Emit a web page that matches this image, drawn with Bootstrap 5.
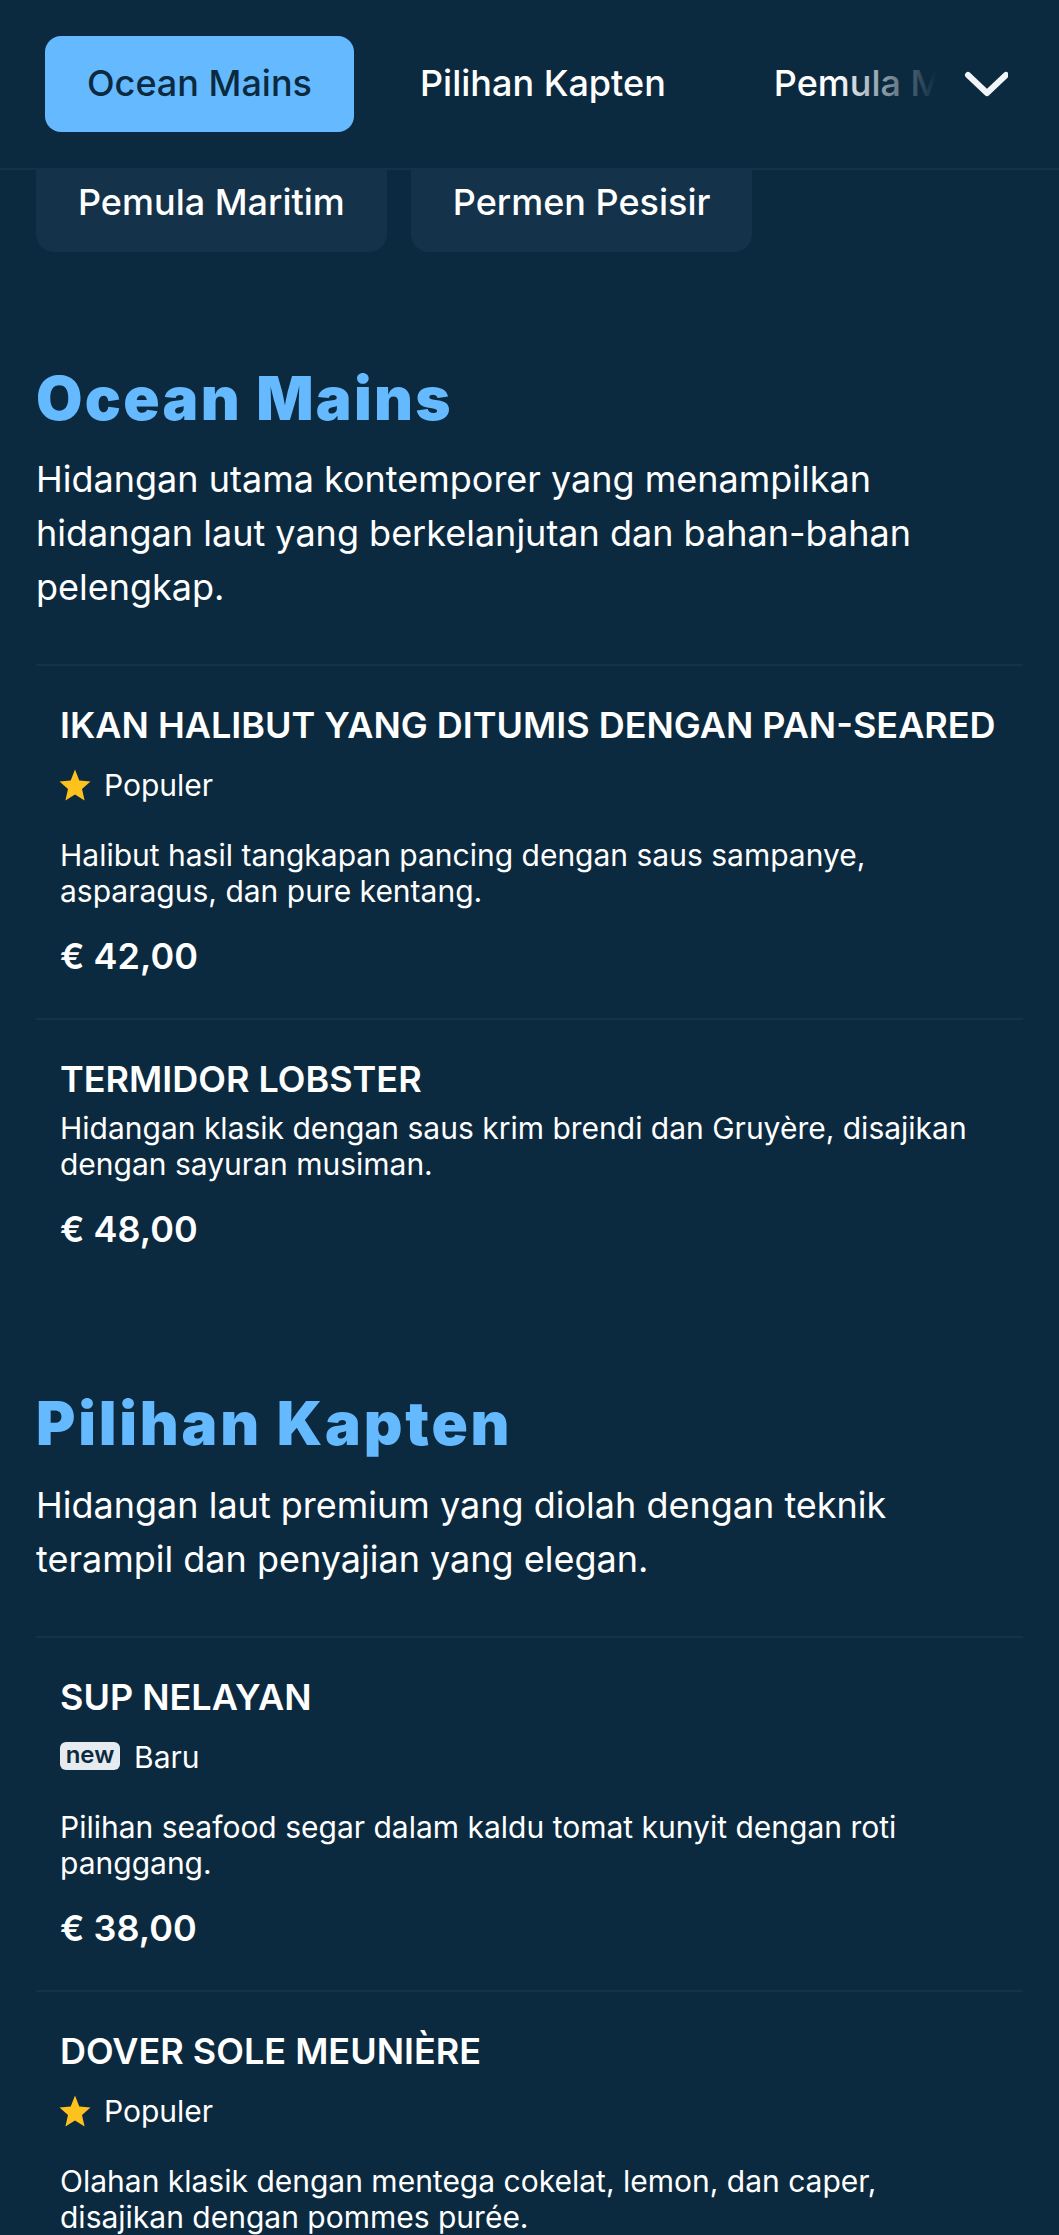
<!DOCTYPE html>
<html lang="id"><head><meta charset="utf-8">
<link href="https://cdn.jsdelivr.net/npm/bootstrap@5.3.0/dist/css/bootstrap.min.css" rel="stylesheet">
<style>
html,body{height:2235px;overflow:hidden}
body{background:#0c2a3f;color:#fff;font-family:Inter,"Liberation Sans",sans-serif}
.tabbar{height:170px;border-bottom:2px solid #15324a;padding:36px 0 0 45px}
.tabscroll{width:891px;overflow:hidden;white-space:nowrap;position:relative;gap:24px}
.tabscroll::after{content:"";position:absolute;right:0;top:0;bottom:0;width:100px;background:linear-gradient(90deg,rgba(12,42,63,0),#0c2a3f)}
.tab-link{height:96px;line-height:94px;font-size:36px;font-weight:500;color:#fff;padding:0 42px;flex:none}
.tab-on{background:#64b9ff;color:#0c2a3f;border-radius:16px}
.chev{margin:0 0 0 28px;flex:none}
.chiprow{padding:0 0 0 36px;gap:24px;margin-top:-1px}
.chip{height:83px;line-height:67px;padding:0 42px;background:#14324a;border-radius:0 0 18px 18px;font-size:36px;font-weight:500}
.sect-title{font-weight:900;color:#64b9ff;font-size:60px;line-height:72px;margin:0 0 0 36px}
.title-ocean{letter-spacing:2.3px;margin-top:110px}
.title-kapten{letter-spacing:2.8px;margin-top:136px}
.sect-text{font-size:36px;line-height:54px;margin:19px 36px 0;width:930px}
.title-ocean + .sect-text{margin-top:18px}
.dish-list{margin:50px 36px 0}
.dish{border-top:2px solid #15324a;padding:37px 24px 0}
.dish-fixed{height:354px}
.dish-name{font-size:36px;font-weight:600;line-height:44px;margin:0}
.tag-line{font-size:30px;line-height:36px;gap:14px;margin-top:20px}
.dish-text{font-size:30px;line-height:36px;margin:34px 0 0}
.dish-name + .dish-text{margin-top:9px}
.dish-price{font-size:36px;font-weight:600;line-height:44px;margin-top:25px}
.newtag{background:#e6ebf0;color:#0c2a3f;font-size:24px;font-weight:600;border-radius:6px;width:60px;height:28px;line-height:25px;text-align:center;margin-top:-2px}
.gold-star{width:32px;height:32px;margin-left:-1px;margin-right:-1px;fill:#fec21f}
</style></head><body>
<div class="tabbar d-flex align-items-start">
  <div class="tabscroll d-flex"><span class="tab-link tab-on">Ocean Mains</span><span class="tab-link">Pilihan Kapten</span><span class="tab-link">Pemula Maritim</span></div>
  <svg class="chev" width="44" height="96" viewBox="0 0 44 96"><path d="M4 39 L23 57 L42 39" fill="none" stroke="#f2f5f7" stroke-width="6" stroke-linecap="round" stroke-linejoin="round"/></svg>
</div>
<div class="chiprow d-flex"><span class="chip">Pemula Maritim</span><span class="chip">Permen Pesisir</span></div>
<h2 class="sect-title title-ocean">Ocean Mains</h2>
<p class="sect-text">Hidangan utama kontemporer yang menampilkan hidangan laut yang berkelanjutan dan bahan-bahan pelengkap.</p>
<div class="dish-list">
  <div class="dish dish-fixed">
    <h3 class="dish-name">IKAN HALIBUT YANG DITUMIS DENGAN PAN-SEARED</h3>
    <div class="tag-line d-flex align-items-center"><svg class="gold-star" viewBox="0 0 32 32"><path d="M16 .5l4.300 11 11.200.9-8.500 7.500 2.600 11.500L16 25.500 6.400 31.400l2.600-11.500L.5 12.400l11.200-.9z"/></svg><span>Populer</span></div>
    <p class="dish-text">Halibut hasil tangkapan pancing dengan saus sampanye, asparagus, dan pure kentang.</p>
    <div class="dish-price">€ 42,00</div>
  </div>
  <div class="dish">
    <h3 class="dish-name">TERMIDOR LOBSTER</h3>
    <p class="dish-text">Hidangan klasik dengan saus krim brendi dan Gruyère, disajikan dengan sayuran musiman.</p>
    <div class="dish-price">€ 48,00</div>
  </div>
</div>
<h2 class="sect-title title-kapten">Pilihan Kapten</h2>
<p class="sect-text">Hidangan laut premium yang diolah dengan teknik terampil dan penyajian yang elegan.</p>
<div class="dish-list">
  <div class="dish dish-fixed">
    <h3 class="dish-name">SUP NELAYAN</h3>
    <div class="tag-line d-flex align-items-center"><span class="newtag">new</span><span>Baru</span></div>
    <p class="dish-text">Pilihan seafood segar dalam kaldu tomat kunyit dengan roti panggang.</p>
    <div class="dish-price">€ 38,00</div>
  </div>
  <div class="dish">
    <h3 class="dish-name">DOVER SOLE MEUNIÈRE</h3>
    <div class="tag-line d-flex align-items-center"><svg class="gold-star" viewBox="0 0 32 32"><path d="M16 .5l4.300 11 11.200.9-8.500 7.500 2.600 11.500L16 25.500 6.400 31.400l2.600-11.500L.5 12.400l11.200-.9z"/></svg><span>Populer</span></div>
    <p class="dish-text">Olahan klasik dengan mentega cokelat, lemon, dan caper, disajikan dengan pommes purée.</p>
  </div>
</div>
<script src="https://cdn.jsdelivr.net/npm/bootstrap@5.3.0/dist/js/bootstrap.bundle.min.js"></script>
</body></html>
